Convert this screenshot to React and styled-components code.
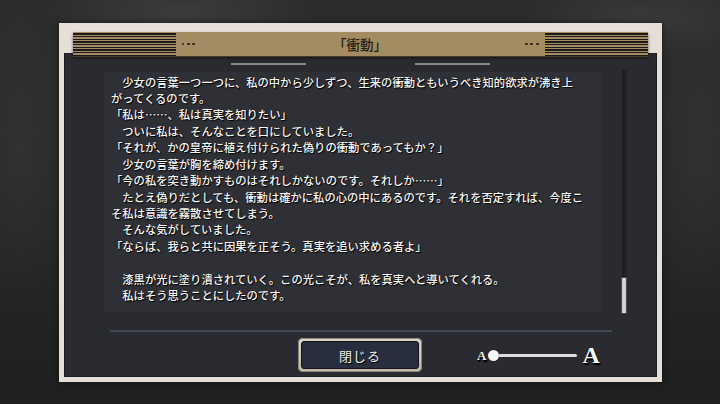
import React from "react";
import styled, { createGlobalStyle } from "styled-components";

const Global = createGlobalStyle`
  html, body { margin: 0; padding: 0; }
  body {
    background: #232323;
    font-family: "Noto Sans CJK JP", "Noto Sans", sans-serif;
  }
`;

const Screen = styled.div`
  width: 720px;
  height: 404px;
  overflow: hidden;
  box-sizing: border-box;
  padding-top: 23px;
  display: flex;
  justify-content: center;
  align-items: flex-start;
  background:
    radial-gradient(ellipse 140px 40px at 180px 12px, rgba(90, 90, 90, 0.35), transparent),
    radial-gradient(ellipse 120px 40px at 640px 18px, rgba(90, 90, 90, 0.3), transparent),
    radial-gradient(ellipse 60px 160px at 20px 150px, rgba(70, 70, 70, 0.3), transparent),
    radial-gradient(ellipse 60px 160px at 700px 150px, rgba(70, 70, 70, 0.3), transparent),
    linear-gradient(#2c2c2c, #262626 60%, #1f1f1f);
`;

const Frame = styled.div`
  width: 603px;
  height: 359px;
  box-sizing: border-box;
  padding: 0 5px 5px;
  background: #e5dfd8;
  display: flex;
  flex-direction: column;
  box-shadow: 0 0 6px rgba(0, 0, 0, 0.5);
`;

const TitleBar = styled.div`
  position: relative;
  z-index: 1;
  height: 24px;
  margin: 9px 9px -3px;
  background: #a38b62;
  display: flex;
  align-items: center;
  box-shadow: 0 1px 0 #4a3d27, 0 2px 3px rgba(0, 0, 0, 0.55);
`;

const Stripes = styled.div`
  width: 103px;
  align-self: stretch;
  background: repeating-linear-gradient(
    to bottom,
    #a38b62 0px,
    #a38b62 1.2px,
    #1c1a17 1.2px,
    #1c1a17 2.67px
  );
`;

const Dots = styled.div`
  display: flex;
  gap: 2.6px;
  margin: 0 6px;
`;

const Dot = styled.span`
  width: 2.8px;
  height: 2.8px;
  border-radius: 50%;
  background: #2a2419;
`;

const Title = styled.div`
  flex: 1;
  text-align: center;
  font-size: 13.5px;
  font-weight: 500;
  color: #241e13;
  line-height: 24px;
`;

const Panel = styled.div`
  flex: 1;
  background: #2a2b30;
  display: flex;
  flex-direction: column;
  padding-top: 10px;
  box-shadow: inset 0 0 0 1px #1c1d20;
`;

const TabMarks = styled.div`
  display: flex;
  justify-content: center;
  gap: 109px;
`;

const TabMark = styled.span`
  width: 75px;
  height: 2px;
  background: #85878b;
`;

const ContentRow = styled.div`
  margin-top: 5px;
  padding-left: 40px;
  display: flex;
  align-items: center;
  gap: 21px;
`;

const TextBox = styled.div`
  width: 497px;
  height: 240px;
  box-sizing: border-box;
  padding: 1.5px 0 0 7.5px;
  background: #2f3036;
  overflow: hidden;
`;

const Line = styled.div`
  height: 16.45px;
  line-height: 16.45px;
  white-space: pre;
  font-size: 11.3px;
  font-weight: 500;
  color: #fbfaf7;
  text-shadow: 1px 1px 1px #000, 0 0 1px #000;
`;

const Track = styled.div`
  position: relative;
  width: 5px;
  height: 244px;
  background: linear-gradient(to right, #1b1c1f, #232427);
`;

const Thumb = styled.div`
  position: absolute;
  left: -0.5px;
  bottom: 0;
  width: 6px;
  height: 37px;
  box-sizing: border-box;
  border: 1px solid #4b4b4b;
  background: linear-gradient(to right, #bdbdbd, #e2e2e2 50%, #bdbdbd);
`;

const Divider = styled.div`
  height: 2px;
  margin: 16px 45px 0 46px;
  background: #43474e;
`;

const BottomRow = styled.div`
  margin-top: 6px;
  display: grid;
  grid-template-columns: 1fr auto 1fr;
  align-items: center;
`;

const CloseButton = styled.button`
  grid-column: 2;
  width: 124px;
  height: 34px;
  padding: 3px;
  border: none;
  border-radius: 5px;
  background: linear-gradient(#dcd6ca, #bfb8ab);
  box-shadow: inset 0 0 0 1px #8d877c;
  display: flex;
  cursor: pointer;
`;

const ButtonFace = styled.span`
  flex: 1;
  border-radius: 3px;
  border: 1px solid #121317;
  background: #272e3d;
  display: flex;
  align-items: center;
  justify-content: center;
  font-family: "Noto Sans CJK JP", sans-serif;
  font-size: 13px;
  letter-spacing: 1px;
  color: #f1efea;
  text-shadow: 1px 1px 1px #000;
`;

const Slider = styled.div`
  grid-column: 3;
  justify-self: start;
  margin-left: 55px;
  display: flex;
  align-items: center;
`;

const Glyph = styled.span`
  font-family: "Liberation Serif", "DejaVu Serif", serif;
  font-weight: bold;
  font-size: ${(p) => p.$size}px;
  line-height: 1;
  color: #f6f6f6;
  text-shadow: 1px 1px 0 #000, 1px 2px 1px #000;
`;

const SliderTrack = styled.div`
  position: relative;
  width: 84px;
  height: 3px;
  margin: 0 5px 0 7px;
  border-radius: 2px;
  background: #dedede;
`;

const Knob = styled.span`
  position: absolute;
  left: -5.5px;
  top: 50%;
  width: 11px;
  height: 11px;
  margin-top: -5.5px;
  border-radius: 50%;
  background: #fafafa;
  box-shadow: 0 0 1px #000;
`;

const lines = [
  "　少女の言葉一つ一つに、私の中から少しずつ、生来の衝動ともいうべき知的欲求が沸き上",
  "がってくるのです。",
  "「私は……、私は真実を知りたい」",
  "　ついに私は、そんなことを口にしていました。",
  "「それが、かの皇帝に植え付けられた偽りの衝動であってもか？」",
  "　少女の言葉が胸を締め付けます。",
  "「今の私を突き動かすものはそれしかないのです。それしか……」",
  "　たとえ偽りだとしても、衝動は確かに私の心の中にあるのです。それを否定すれば、今度こ",
  "そ私は意識を霧散させてしまう。",
  "　そんな気がしていました。",
  "「ならば、我らと共に因果を正そう。真実を追い求める者よ」",
  "",
  "　漆黒が光に塗り潰されていく。この光こそが、私を真実へと導いてくれる。",
  "　私はそう思うことにしたのです。",
];

const DotGroup = () => (
  <Dots>
    <Dot />
    <Dot />
    <Dot />
  </Dots>
);

export default function App() {
  return (
    <>
      <Global />
      <Screen>
        <Frame>
          <TitleBar>
            <Stripes />
            <DotGroup />
            <Title>「衝動」</Title>
            <DotGroup />
            <Stripes />
          </TitleBar>
          <Panel>
            <TabMarks>
              <TabMark />
              <TabMark />
            </TabMarks>
            <ContentRow>
              <TextBox>
                {lines.map((l, i) => (
                  <Line key={i}>{l}</Line>
                ))}
              </TextBox>
              <Track>
                <Thumb />
              </Track>
            </ContentRow>
            <Divider />
            <BottomRow>
              <CloseButton>
                <ButtonFace>閉じる</ButtonFace>
              </CloseButton>
              <Slider>
                <Glyph $size={13}>A</Glyph>
                <SliderTrack>
                  <Knob />
                </SliderTrack>
                <Glyph $size={24}>A</Glyph>
              </Slider>
            </BottomRow>
          </Panel>
        </Frame>
      </Screen>
    </>
  );
}
